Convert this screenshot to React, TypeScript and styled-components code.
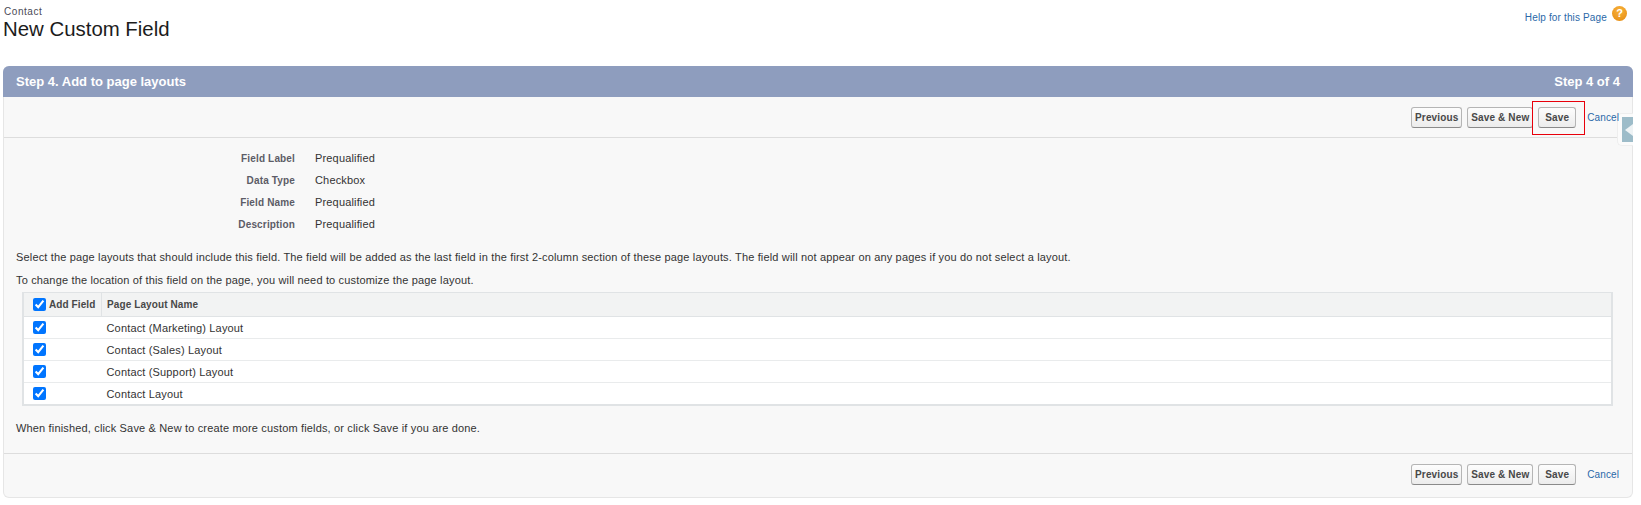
import React from 'react';
import styled, { createGlobalStyle } from 'styled-components';

const GlobalStyle = createGlobalStyle`
	html, body {
		margin: 0;
		padding: 0;
		background: #fff;
		font-family: "Liberation Sans", Arial, sans-serif;
		color: #3e3e3c;
	}
`;

const Page = styled.div`
	width: 1641px;
	height: 505px;
	overflow: hidden;
	padding: 6px 8px 0 3px;
	box-sizing: border-box;
`;

const PageHead = styled.div`
	display: flex;
	justify-content: space-between;
	height: 60px;
`;

const TitleBlock = styled.div`
	display: flex;
	flex-direction: column;
	padding-left: 1px;
`;

const Crumb = styled.div`
	font-size: 10px;
	line-height: 12px;
	color: #4a4a56;
	letter-spacing: 0.55px;
`;

const Title = styled.h1`
	margin: 0 0 0 -1px;
	font-size: 20.4px;
	line-height: 22px;
	font-weight: 400;
	color: #1c1c1c;
`;

const HelpRow = styled.div`
	display: flex;
	align-items: flex-start;
	gap: 5px;
	margin-right: 6px;
`;

const HelpLink = styled.a`
	font-size: 10px;
	line-height: 12px;
	margin-top: 6px;
	margin-left: -1px;
	letter-spacing: 0.15px;
	color: #2a68a8;
`;

const HelpIcon = styled.span`
	width: 15px;
	height: 15px;
	border-radius: 50%;
	background: radial-gradient(circle at 50% 30%, #f8b23c, #e58a0f);
	color: #fff;
	font-size: 11px;
	line-height: 15px;
	font-weight: 700;
	text-align: center;
`;

const Panel = styled.section`
	position: relative;
	width: 1630px;
	height: 432px;
	box-sizing: border-box;
	display: flex;
	flex-direction: column;
	background: #f8f8f8;
	border: 1px solid #e6e6e6;
	border-top: 0;
	border-radius: 6px;
`;

const PanelHeader = styled.header`
	display: flex;
	justify-content: space-between;
	align-items: center;
	height: 31px;
	margin: 0 -1px;
	padding: 0 13px;
	background: #8e9dbe;
	border-radius: 6px 6px 0 0;
	color: #fff;
	font-size: 13px;
	font-weight: 700;
`;

const ButtonBar = styled.div<{ $bottom?: boolean }>`
	display: flex;
	align-items: center;
	justify-content: flex-end;
	height: ${(p) => (p.$bottom ? '44px' : '41px')};
	padding: ${(p) => (p.$bottom ? '0 13px 2px 0' : '1px 13px 0 0')};
	box-sizing: border-box;
	border-${(p) => (p.$bottom ? 'top' : 'bottom')}: 1px solid #dddddd;
`;

const Button = styled.button<{ $w: number }>`
	height: 21px;
	width: ${(p) => p.$w}px;
	margin-right: 5px;
	padding: 0;
	border: 1px solid #b5b5b5;
	border-bottom-color: #8a8a8a;
	border-radius: 3px;
	background: linear-gradient(#fdfdfd, #ececec);
	color: #484848;
	font-family: "Liberation Sans", Arial, sans-serif;
	font-size: 10px;
	font-weight: 700;
	letter-spacing: 0.15px;
`;

const CancelLink = styled.a`
	position: relative;
	z-index: 1;
	margin-left: 6px;
	font-size: 10px;
	letter-spacing: 0.1px;
	color: #2a68a8;
`;

const RedBox = styled.div`
	position: absolute;
	left: 1528px;
	top: 35px;
	width: 51px;
	height: 32px;
	border: 1px solid #e8000b;
`;

const SideTab = styled.div`
	position: absolute;
	right: -1px;
	top: 47px;
	width: 16px;
	height: 33px;
	box-sizing: border-box;
	padding: 4px 0 0 5px;
	background: #fbfbfb;
	border: 1px solid #eeeeee;
	border-right: 0;
	border-radius: 5px 0 0 5px;
`;

const SideTabInner = styled.div`
	width: 11px;
	height: 25px;
	margin-left: -1px;
	margin-top: -1px;
	display: flex;
	align-items: center;
	justify-content: flex-end;
	background: #9dbcc9;
`;

const SideArrow = styled.div`
	border-style: solid;
	border-width: 6px 8px 6px 0;
	border-color: transparent #eef3f5 transparent transparent;
`;

const Body = styled.div`
	flex: 1;
	padding: 9px 0 0 12px;
	display: flex;
	flex-direction: column;
`;

const InfoGrid = styled.dl`
	display: grid;
	grid-template-columns: 279px 1fr;
	column-gap: 20px;
	grid-auto-rows: 22px;
	margin: 0;
	align-items: center;
`;

const InfoLabel = styled.dt`
	text-align: right;
	font-size: 10px;
	font-weight: 700;
	letter-spacing: 0.15px;
	color: #5c5c66;
`;

const InfoValue = styled.dd`
	margin: 0;
	font-size: 11px;
	letter-spacing: 0.16px;
	color: #333;
`;

const Note = styled.p<{ $top: number }>`
	margin: ${(p) => p.$top}px 0 0;
	font-size: 11px;
	line-height: 13px;
	letter-spacing: 0.16px;
	color: #333;
`;

const LayoutTable = styled.table`
	width: 1591px;
	margin: 5px 0 0 6px;
	box-sizing: border-box;
	border-collapse: collapse;
	background: #fff;
	border: 1px solid #e0e3e5;
	border-width: 1px 2px 2px 2px;
`;

const HeadCell = styled.th`
	height: 23px;
	padding: 0 0 0 5px;
	background: #f2f3f3;
	border-bottom: 1px solid #e0e3e5;
	border-right: 1px solid #e0e3e5;
	font-size: 10px;
	font-weight: 700;
	letter-spacing: 0.1px;
	text-align: left;
	color: #484848;
	&:first-child {
		width: 68px;
		padding-left: 9px;
	}
	&:last-child {
		border-right: 0;
	}
`;

const Cell = styled.td`
	height: 21px;
	padding: 0 0 0 5px;
	border-bottom: 1px solid #e9ebec;
	font-size: 11px;
	letter-spacing: 0.16px;
	color: #333;
	&:first-child {
		padding-left: 9px;
	}
`;

const HeadCheck = styled.label`
	display: flex;
	align-items: center;
	gap: 3px;
`;

const Check = styled.input.attrs({ type: 'checkbox' })`
	display: block;
	width: 13px;
	height: 13px;
	margin: 0;
	accent-color: #0075ff;
`;

const fields = [
	['Field Label', 'Prequalified'],
	['Data Type', 'Checkbox'],
	['Field Name', 'Prequalified'],
	['Description', 'Prequalified'],
];

const layouts = [
	'Contact (Marketing) Layout',
	'Contact (Sales) Layout',
	'Contact (Support) Layout',
	'Contact Layout',
];

const Buttons: React.FC = () => (
	<>
		<Button $w={51}>Previous</Button>
		<Button $w={66}>Save &amp; New</Button>
		<Button $w={38}>Save</Button>
		<CancelLink>Cancel</CancelLink>
	</>
);

const App: React.FC = () => {
	return (
		<Page>
			<GlobalStyle />
			<PageHead>
				<TitleBlock>
					<Crumb>Contact</Crumb>
					<Title>New Custom Field</Title>
				</TitleBlock>
				<HelpRow>
					<HelpLink>Help for this Page</HelpLink>
					<HelpIcon>?</HelpIcon>
				</HelpRow>
			</PageHead>
			<Panel>
				<PanelHeader>
					<span>Step 4. Add to page layouts</span>
					<span>Step 4 of 4</span>
				</PanelHeader>
				<ButtonBar>
					<Buttons />
				</ButtonBar>
				<RedBox />
				<SideTab>
					<SideTabInner>
						<SideArrow />
					</SideTabInner>
				</SideTab>
				<Body>
					<InfoGrid>
						{fields.map(([label, value]) => (
							<React.Fragment key={label}>
								<InfoLabel>{label}</InfoLabel>
								<InfoValue>{value}</InfoValue>
							</React.Fragment>
						))}
					</InfoGrid>
					<Note $top={16}>
						Select the page layouts that should include this field. The field will be added as the
						last field in the first 2-column section of these page layouts. The field will not
						appear on any pages if you do not select a layout.
					</Note>
					<Note $top={10}>
						To change the location of this field on the page, you will need to customize the page
						layout.
					</Note>
					<LayoutTable>
						<thead>
							<tr>
								<HeadCell>
									<HeadCheck>
										<Check defaultChecked />
										Add Field
									</HeadCheck>
								</HeadCell>
								<HeadCell>Page Layout Name</HeadCell>
							</tr>
						</thead>
						<tbody>
							{layouts.map((name) => (
								<tr key={name}>
									<Cell>
										<Check defaultChecked />
									</Cell>
									<Cell>{name}</Cell>
								</tr>
							))}
						</tbody>
					</LayoutTable>
					<Note $top={16}>
						When finished, click Save &amp; New to create more custom fields, or click Save if you
						are done.
					</Note>
				</Body>
				<ButtonBar $bottom>
					<Buttons />
				</ButtonBar>
			</Panel>
		</Page>
	);
};

export default App;
